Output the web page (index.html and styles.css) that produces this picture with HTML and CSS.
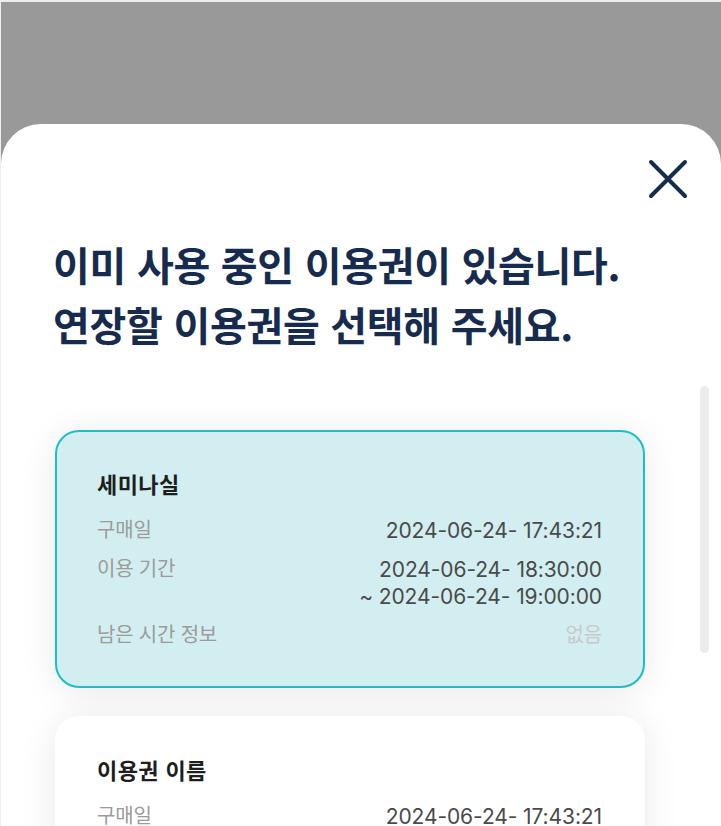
FILE: index.html
```html
<!DOCTYPE html>
<html lang="ko">
<head>
<meta charset="utf-8">
<link rel="stylesheet" href="styles.css">
</head>
<body>
<div class="frame">
  <div class="overlay">
    <div class="sheet">
      <div class="sheet-head">
        <button class="close" aria-label="닫기">
          <svg width="40" height="40" viewBox="0 0 40 40"><path d="M3 3 L37 37 M37 3 L3 37" stroke="#142c4d" stroke-width="4" stroke-linecap="round" fill="none"/></svg>
        </button>
      </div>
      <h1 class="title">이미 사용 중인 이용권이 있습니다.<br>연장할 이용권을 선택해 주세요.</h1>
      <div class="list">
        <div class="card selected">
          <div class="card-title">세미나실</div>
          <div class="rows">
            <div class="row"><span class="label">구매일</span><span class="value">2024-06-24- 17:43:21</span></div>
            <div class="row"><span class="label">이용 기간</span><span class="value">2024-06-24- 18:30:00<br>~ 2024-06-24- 19:00:00</span></div>
            <div class="row"><span class="label">남은 시간 정보</span><span class="value muted">없음</span></div>
          </div>
        </div>
        <div class="card">
          <div class="card-title">이용권 이름</div>
          <div class="rows">
            <div class="row"><span class="label">구매일</span><span class="value">2024-06-24- 17:43:21</span></div>
            <div class="row"><span class="label">이용 기간</span><span class="value">2024-06-24- 18:30:00<br>~ 2024-06-24- 19:00:00</span></div>
          </div>
        </div>
      </div>
      <div class="scrollbar"></div>
    </div>
  </div>
</div>
</body>
</html>
```

FILE: styles.css
```css
* { box-sizing: border-box; }
html, body { margin: 0; padding: 0; height: 100%; overflow: hidden; }
body {
  font-family: "Inter", "Noto Sans CJK KR", sans-serif;
  background: #eeeeee;
}
.frame {
  height: 826px;
  padding: 2px 0 0 1px;
}
.overlay {
  height: 100%;
  background: #999999;
  padding-top: 122px;
}
.sheet {
  position: relative;
  height: 100%;
  background: #ffffff;
  border-radius: 40px 40px 0 0;
  padding: 35px 0 0 54px;
  overflow: hidden;
}
.sheet-head {
  display: flex;
  justify-content: flex-end;
  padding-right: 33px;
}
.close {
  border: 0;
  background: none;
  padding: 0;
  width: 40px;
  height: 40px;
  display: block;
}
.title {
  margin: 35px 0 0 -2px;
  font-family: "Noto Sans CJK KR", sans-serif;
  font-size: 40px;
  font-weight: 700;
  line-height: 60px;
  color: #162b4d;
  letter-spacing: -0.3px;
}
.list {
  margin-top: 76px;
  width: 590px;
  display: flex;
  flex-direction: column;
  gap: 28px;
}
.card {
  background: #ffffff;
  border-radius: 24px;
  padding: 38px 41px 37px 40px;
  box-shadow: 0 4px 36px rgba(0, 0, 0, 0.09);
  border: 2px solid transparent;
}
.card.selected {
  background: #d2eef0;
  border-color: #1bbfc4;
}
.card-title {
  font-family: "Noto Sans CJK KR", sans-serif;
  font-size: 22px;
  font-weight: 700;
  color: #1e1e1e;
  line-height: 26px;
  letter-spacing: 0.4px;
}
.rows {
  margin-top: 21px;
  display: flex;
  flex-direction: column;
  gap: 12px;
}
.row {
  display: flex;
  justify-content: space-between;
  align-items: flex-start;
  font-size: 20px;
  line-height: 27px;
}
.label {
  color: #9b9b9b;
  letter-spacing: -0.2px;
}
.value {
  color: #4a4a4a;
  text-align: right;
  font-size: 21px;
  letter-spacing: -0.1px;
}
.value.muted {
  color: #c9c9c9;
  font-size: 20px;
}
.scrollbar {
  position: absolute;
  right: 12px;
  top: 262px;
  width: 9px;
  height: 267px;
  border-radius: 5px;
  background: #ececec;
}
```
